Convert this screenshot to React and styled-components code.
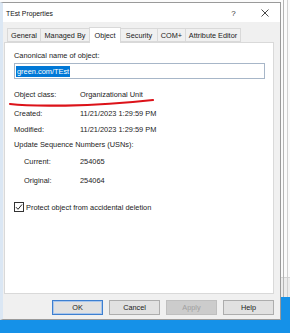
import React from "react";
import styled, { createGlobalStyle } from "styled-components";

const Global = createGlobalStyle`
  html, body { margin: 0; padding: 0; }
  body { font-family: "Liberation Sans", Arial, sans-serif; }
`;

const Screen = styled.div`
  position: relative;
  width: 290px;
  height: 333px;
  overflow: hidden;
  background: #1591e8;
`;

const BackWindow = styled.div`
  position: absolute;
  left: 0;
  top: 0;
  width: 290px;
  height: 297px;
  background:
    linear-gradient(to right, transparent 283px, #b4b4b4 283px, #b4b4b4 284px, transparent 284px, transparent 287px, #d0d0d0 287px, #d0d0d0 288px, transparent 288px),
    linear-gradient(to bottom, #fbfbfb 277px, #d4d4d4 277px, #d4d4d4 278px, #ececec 278px);
`;

const Dialog = styled.div`
  position: absolute;
  left: 0;
  top: 2px;
  width: 281px;
  height: 318px;
  box-sizing: border-box;
  border: 1px solid #9a9a9a;
  border-left: 3px solid #dbe7f4;
  background: #f0f0f0;
  display: flex;
  flex-direction: column;
  color: #1b1b1b;
  font-size: 7.4px;
`;

const TitleBar = styled.div`
  height: 19px;
  flex: none;
  background: #ffffff;
  display: flex;
  align-items: center;
  padding-left: 3px;
  box-sizing: border-box;
`;

const Title = styled.div`
  flex: 1;
  font-size: 6.8px;
  color: #111;
  padding-top: 1px;
`;

const TitleButton = styled.div`
  width: 31px;
  height: 19px;
  display: flex;
  align-items: center;
  justify-content: center;
  color: #333;
  font-size: 8px;
  padding-top: 1px;
  box-sizing: border-box;
`;

const Body = styled.div`
  flex: 1;
  display: flex;
  flex-direction: column;
  padding: 5px 6px 4px 1px;
`;

const Tabs = styled.div`
  height: 15px;
  display: flex;
  align-items: flex-end;
  padding-left: 3px;
  position: relative;
  z-index: 1;
`;

const Tab = styled.div`
  box-sizing: border-box;
  width: ${(p) => p.$w}px;
  height: ${(p) => (p.$active ? 16 : 14)}px;
  margin-bottom: ${(p) => (p.$active ? -1 : 0)}px;
  margin-right: -1px;
  border: 1px solid #d9d9d9;
  border-bottom: ${(p) => (p.$active ? "none" : "1px solid #d9d9d9")};
  background: ${(p) => (p.$active ? "#ffffff" : "#f0f0f0")};
  display: flex;
  align-items: center;
  justify-content: center;
  white-space: nowrap;
  font-size: 7.3px;
  position: relative;
  z-index: ${(p) => (p.$active ? 2 : 1)};
`;

const Panel = styled.div`
  height: 252px;
  box-sizing: border-box;
  border: 1px solid #d9d9d9;
  background: #ffffff;
  display: flex;
  flex-direction: column;
  padding-left: 9px;
`;

const Line = styled.div`
  height: 12px;
  line-height: 12px;
  margin-top: ${(p) => p.$mt}px;
  display: flex;
  padding-left: ${(p) => p.$indent || 0}px;
  white-space: nowrap;
`;

const Label = styled.span`
  width: ${(p) => p.$w}px;
  flex: none;
`;

const Field = styled.div`
  margin-top: 1px;
  width: 251px;
  height: 16px;
  box-sizing: border-box;
  border: 1px solid #a7b6c8;
  display: flex;
  align-items: center;
  padding-left: 1px;
`;

const Selected = styled.span`
  background: #0078d7;
  color: #ffffff;
  line-height: 11px;
  padding: 0 1px 0 1px;
`;

const CheckRow = styled.label`
  margin-top: 14px;
  display: flex;
  align-items: center;
  gap: 2px;
  height: 12px;
`;

const Box = styled.span`
  width: 10px;
  height: 10px;
  box-sizing: border-box;
  border: 1px solid #333;
  background: #fff;
  display: flex;
  align-items: center;
  justify-content: center;
`;

const Buttons = styled.div`
  margin-top: 6px;
  display: flex;
  justify-content: flex-end;
  gap: 6px;
`;

const Button = styled.div`
  width: 51px;
  height: 15px;
  box-sizing: border-box;
  display: flex;
  align-items: center;
  justify-content: center;
  font-size: 7.3px;
  background: ${(p) => (p.$disabled ? "#cccccc" : "#e1e1e1")};
  color: ${(p) => (p.$disabled ? "#a0a0a0" : "#1b1b1b")};
  border: 1px solid ${(p) => (p.$default ? "#3d7fd0" : p.$disabled ? "#bfbfbf" : "#adadad")};
  box-shadow: ${(p) => (p.$default ? "inset 0 0 0 1px #a9c6ec" : "none")};
`;

const Annotation = styled.svg`
  position: absolute;
  left: 0;
  top: 0;
  pointer-events: none;
`;

export default function App() {
  const tabs = [
    ["General", 34],
    ["Managed By", 50],
    ["Object", 32],
    ["Security", 38],
    ["COM+", 29],
    ["Attribute Editor", 56],
  ];
  return (
    <Screen>
      <Global />
      <BackWindow />
      <Dialog>
        <TitleBar>
          <Title>TEst Properties</Title>
          <TitleButton>?</TitleButton>
          <TitleButton>
            <svg width="8" height="8" viewBox="0 0 8 8">
              <path d="M0.5 0.5 L7.5 7.5 M7.5 0.5 L0.5 7.5" stroke="#333" strokeWidth="0.9" />
            </svg>
          </TitleButton>
        </TitleBar>
        <Body>
          <Tabs>
            {tabs.map(([t, w]) => (
              <Tab key={t} $w={w} $active={t === "Object"}>
                {t}
              </Tab>
            ))}
          </Tabs>
          <Panel>
            <Line $mt={7}>Canonical name of object:</Line>
            <Field>
              <Selected>green.com/TEst</Selected>
            </Field>
            <Line $mt={10}>
              <Label $w={66}>Object class:</Label>
              <span>Organizational Unit</span>
            </Line>
            <Line $mt={7}>
              <Label $w={66}>Created:</Label>
              <span>11/21/2023 1:29:59 PM</span>
            </Line>
            <Line $mt={4}>
              <Label $w={66}>Modified:</Label>
              <span>11/21/2023 1:29:59 PM</span>
            </Line>
            <Line $mt={3}>Update Sequence Numbers (USNs):</Line>
            <Line $mt={5} $indent={10}>
              <Label $w={56}>Current:</Label>
              <span>254065</span>
            </Line>
            <Line $mt={7} $indent={10}>
              <Label $w={56}>Original:</Label>
              <span>254064</span>
            </Line>
            <CheckRow>
              <Box>
                <svg width="8" height="8" viewBox="0 0 8 8">
                  <path d="M1 4.2 L3 6.3 L7 1.5" fill="none" stroke="#222" strokeWidth="1" />
                </svg>
              </Box>
              <span>Protect object from accidental deletion</span>
            </CheckRow>
          </Panel>
          <Buttons>
            <Button $default>OK</Button>
            <Button>Cancel</Button>
            <Button $disabled>Apply</Button>
            <Button>Help</Button>
          </Buttons>
        </Body>
      </Dialog>
      <Annotation width="290" height="333" viewBox="0 0 290 333">
        <path
          d="M10 104 C 30 106.5, 90 107, 153 100"
          fill="none"
          stroke="#dc1219"
          strokeWidth="2.2"
          strokeLinecap="round"
        />
      </Annotation>
    </Screen>
  );
}
